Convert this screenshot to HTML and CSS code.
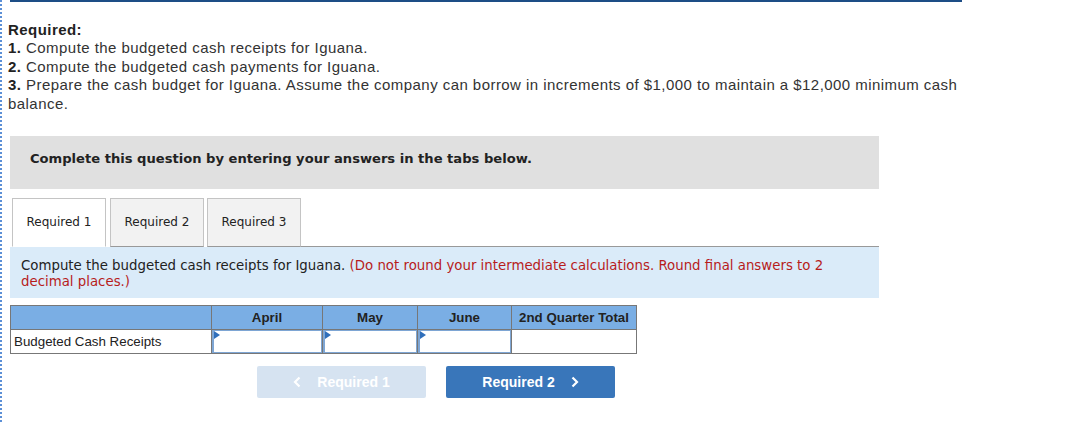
FILE: index.html
```html
<!DOCTYPE html>
<html>
<head>
<meta charset="utf-8">
<link rel="stylesheet" href="styles.css">
</head>
<body>
<div class="page">
  <div class="topline"></div>
  <div class="required">
    <p><b>Required:</b></p>
    <p><b>1.</b> Compute the budgeted cash receipts for Iguana.</p>
    <p><b>2.</b> Compute the budgeted cash payments for Iguana.</p>
    <p><b>3.</b> Prepare the cash budget for Iguana. Assume the company can borrow in increments of $1,000 to maintain a $12,000 minimum cash balance.</p>
  </div>
  <div class="notice">Complete this question by entering your answers in the tabs below.</div>
  <div class="tabs">
    <div class="tab active">Required 1</div>
    <div class="tab">Required 2</div>
    <div class="tab">Required 3</div>
    <div class="tabfill"></div>
  </div>
  <div class="info">Compute the budgeted cash receipts for Iguana. <span class="red">(Do not round your intermediate calculations. Round final answers to 2 decimal places.)</span></div>
  <table class="grid">
    <tr class="head">
      <th class="c0"></th>
      <th class="c1">April</th>
      <th class="c2">May</th>
      <th class="c3">June</th>
      <th class="c4">2nd Quarter Total</th>
    </tr>
    <tr>
      <td class="label">Budgeted Cash Receipts</td>
      <td class="inp"><div class="box"></div></td>
      <td class="inp"><div class="box"></div></td>
      <td class="inp"><div class="box"></div></td>
      <td></td>
    </tr>
  </table>
  <div class="nav">
    <div class="btn disabled"><svg class="chev left" width="8" height="12" viewBox="0 0 8 12"><path d="M6.5 1.5 L2 6 L6.5 10.5" fill="none" stroke="#fff" stroke-width="2.2"/></svg>Required 1</div>
    <div class="btn primary">Required 2<svg class="chev right" width="8" height="12" viewBox="0 0 8 12"><path d="M1.5 1.5 L6 6 L1.5 10.5" fill="none" stroke="#fff" stroke-width="2.2"/></svg></div>
  </div>
</div>
</body>
</html>
```
FILE: styles.css
```css
html, body {
  margin: 0;
  padding: 0;
  background: #fff;
}
body {
  height: 422px;
  overflow: hidden;
  border-left: 2px dotted #5b8fd6;
  box-sizing: border-box;
}
.page {
  padding-left: 6px;
  width: 960px;
}
.topline {
  margin-left: 2px;
  height: 2px;
  background: #1d4d86;
  width: 952px;
}
.required {
  margin-top: 19px;
  font-family: "Liberation Sans", Arial, sans-serif;
  font-size: 15px;
  letter-spacing: 0.45px;
  line-height: 18.4px;
  color: #333;
}
.required p { margin: 0; }
.required b { color: #222; }
.notice {
  margin: 23px 0 0 2px;
  width: 869px;
  height: 53px;
  box-sizing: border-box;
  background: #e0e0e0;
  font-family: "DejaVu Sans", Verdana, sans-serif;
  font-weight: bold;
  font-size: 13.1px;
  color: #222;
  padding: 15px 0 0 20px;
}
.tabs {
  display: flex;
  margin: 9px 0 0 2px;
  width: 869px;
  height: 49px;
  font-family: "DejaVu Sans", Verdana, sans-serif;
  font-size: 12px;
  color: #222;
}
.tab {
  width: 94px;
  box-sizing: border-box;
  border: 1px solid #c4c4c4;
  border-bottom: 1px solid #999;
  background: #f2f2f2;
  display: flex;
  align-items: center;
  justify-content: center;
  margin-right: 3px;
  padding-bottom: 1px;
}
.tab.active {
  margin-left: 2px;
  margin-right: 4px;
  background: #fff;
  border-color: #c4c4c4;
  border-bottom-color: #fff;
}
.tabfill {
  flex: 1;
  border-bottom: 1px solid #999;
  margin-left: -3px;
}
.info {
  margin-left: 2px;
  width: 869px;
  height: 51px;
  box-sizing: border-box;
  background: #daebf9;
  font-family: "DejaVu Sans", Verdana, sans-serif;
  font-size: 13.33px;
  line-height: 16px;
  color: #222;
  padding: 11px 30px 0 11px;
}
.red { color: #b71c1c; }
.grid {
  margin: 7px 0 0 2px;
  border-collapse: collapse;
  font-family: "Liberation Sans", Arial, sans-serif;
  font-size: 13.33px;
  color: #222;
}
.grid th, .grid td {
  border: 1px solid #777;
  padding: 0;
}
.grid th {
  background: #7aaee4;
  height: 23px;
  font-weight: bold;
  font-size: 13.3px;
  text-align: center;
  color: #222;
}
.grid td { height: 23px; }
.c0 { width: 200px; }
.c1 { width: 110px; }
.c2 { width: 94px; }
.c3 { width: 93px; }
.c4 { width: 124px; }
.label { padding-left: 3px !important; }
.inp { position: relative; }
.box {
  position: absolute;
  inset: 0;
  border: 1px solid #7ea6d4;
  border-left-width: 2px;
  box-sizing: border-box;
}
.box::before {
  content: "";
  position: absolute;
  left: 0;
  top: 0;
  border-left: 6px solid #2f6fbb;
  border-top: 4px solid transparent;
  border-bottom: 4px solid transparent;
}
.nav {
  display: flex;
  gap: 20px;
  margin: 12px 0 0 249px;
}
.btn {
  width: 169px;
  height: 32px;
  box-sizing: border-box;
  border-radius: 2px;
  display: flex;
  align-items: center;
  justify-content: center;
  font-family: "Liberation Sans", Arial, sans-serif;
  font-weight: bold;
  font-size: 14px;
  color: #fff;
}
.btn.disabled { background: #d6e3f1; }
.btn.primary { background: #3976ba; }
.chev.left { margin-right: 16px; }
.chev.right { margin-left: 16px; }
```
